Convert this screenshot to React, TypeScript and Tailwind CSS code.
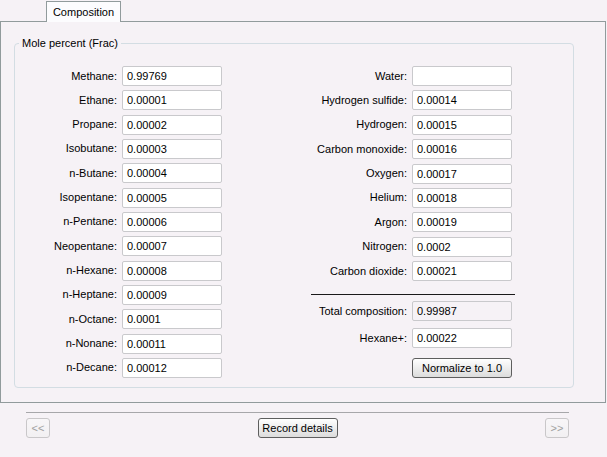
import React from 'react';

const leftRows: [string, string][] = [
  ['Methane:', '0.99769'],
  ['Ethane:', '0.00001'],
  ['Propane:', '0.00002'],
  ['Isobutane:', '0.00003'],
  ['n-Butane:', '0.00004'],
  ['Isopentane:', '0.00005'],
  ['n-Pentane:', '0.00006'],
  ['Neopentane:', '0.00007'],
  ['n-Hexane:', '0.00008'],
  ['n-Heptane:', '0.00009'],
  ['n-Octane:', '0.0001'],
  ['n-Nonane:', '0.00011'],
  ['n-Decane:', '0.00012'],
];

const rightRows: [string, string][] = [
  ['Water:', ''],
  ['Hydrogen sulfide:', '0.00014'],
  ['Hydrogen:', '0.00015'],
  ['Carbon monoxide:', '0.00016'],
  ['Oxygen:', '0.00017'],
  ['Helium:', '0.00018'],
  ['Argon:', '0.00019'],
  ['Nitrogen:', '0.0002'],
  ['Carbon dioxide:', '0.00021'],
];

const Field = ({ value, readOnly }: { value: string; readOnly?: boolean }) => (
  <div
    className={`h-[20px] w-[100px] rounded-[2px] border border-[#c9c9cc] px-[4px] leading-[18px] ${
      readOnly ? 'bg-[#f6f2f6]' : 'bg-white'
    }`}
  >
    {value}
  </div>
);

const Row = ({ label, value, labelW }: { label: string; value: string; labelW: string }) => (
  <div className="flex h-[20px] items-center gap-[5px]">
    <div className={`${labelW} text-right`}>{label}</div>
    <Field value={value} />
  </div>
);

const Button = ({ children, className, disabled }: { children: React.ReactNode; className?: string; disabled?: boolean }) => (
  <button
    className={`flex h-[20px] items-center justify-center rounded-[3px] border bg-gradient-to-b ${
      disabled
        ? 'border-[#c9c7c9] from-[#f8f6f8] to-[#f2f0f2] text-[#a0a0a0]'
        : 'border-[#5e5e5e] from-[#ffffff] to-[#dcdcdc] text-black'
    } ${className ?? ''}`}
  >
    {children}
  </button>
);

export default function App() {
  return (
    <div
      className="h-[457px] w-[607px] bg-[#f6f2f6] text-[11px] leading-[13px] text-black"
      style={{ fontFamily: '"Liberation Sans", Arial, sans-serif' }}
    >
      {/* Tab strip */}
      <div className="flex pl-[46px] pt-[1px]">
        <div className="relative z-10 -mb-px flex h-[21px] w-[75px] items-center justify-center border border-b-0 border-[#919b9c] bg-[#fcfcfe]">
          Composition
        </div>
      </div>

      {/* Tab panel */}
      <div className="h-[382px] w-[606px] border border-[#919b9c] bg-[#f6f2f6] pl-[13px] pt-[15px]">
        <fieldset className="m-0 w-[560px] rounded-[4px] border border-[#d3dde3] p-0">
          <legend className="ml-[4px] px-[3px]">Mole percent (Frac)</legend>
          <div className="flex gap-[5px] pb-[9px] pl-[5px] pt-[16px]">
            <div className="flex h-[312px] flex-col justify-between">
              {leftRows.map(([l, v]) => (
                <Row key={l} label={l} value={v} labelW="w-[97px]" />
              ))}
            </div>
            <div className="flex flex-col">
              <div className="flex h-[215px] flex-col justify-between">
                {rightRows.map(([l, v]) => (
                  <Row key={l} label={l} value={v} labelW="w-[180px]" />
                ))}
              </div>
              <div className="ml-[84px] mt-[13px] h-px w-[204px] bg-[#1a1a1a]" />
              <div className="mt-[6px] flex h-[20px] items-center gap-[5px]">
                <div className="w-[180px] text-right">Total composition:</div>
                <Field value="0.99987" readOnly />
              </div>
              <div className="mt-[7px] flex h-[20px] items-center gap-[5px]">
                <div className="w-[180px] text-right">Hexane+:</div>
                <Field value="0.00022" />
              </div>
              <div className="mt-[10px] flex">
                <Button className="ml-[185px] w-[100px]">Normalize to 1.0</Button>
              </div>
            </div>
          </div>
        </fieldset>
      </div>

      {/* Bottom navigation */}
      <div className="px-[26px] pt-[9px]">
        <div className="h-px w-[543px] bg-[#a7a7aa]" />
        <div className="mt-[5px] flex items-center justify-between">
          <Button disabled className="w-[24px]">&lt;&lt;</Button>
          <Button className="w-[80px]">Record details</Button>
          <Button disabled className="mr-[12px] w-[24px]">&gt;&gt;</Button>
        </div>
      </div>
    </div>
  );
}
